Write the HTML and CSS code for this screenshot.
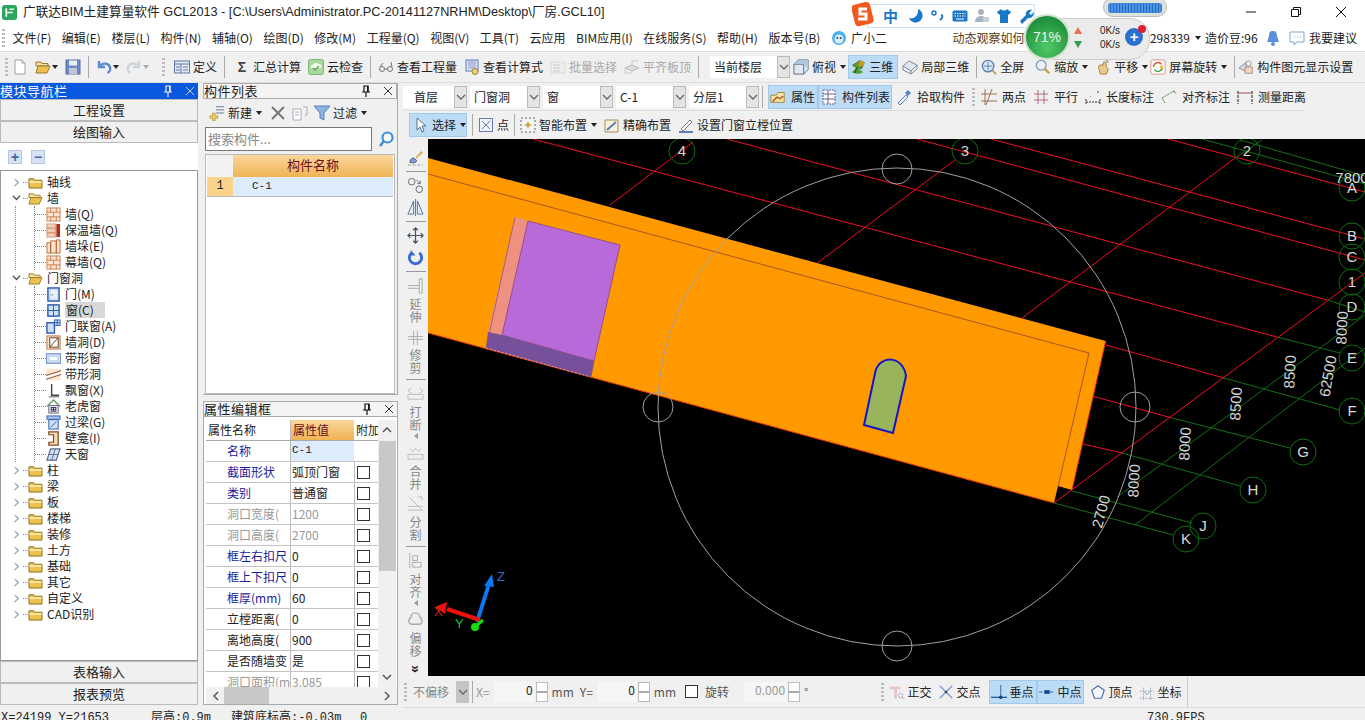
FILE: index.html
```html
<!DOCTYPE html>
<html lang="zh-CN">
<head>
<meta charset="utf-8">
<title>广联达BIM土建算量软件 GCL2013</title>
<link rel="stylesheet" href="styles.css">
</head>
<body>
<svg class="sprites" width="0" height="0">
<defs>
<symbol id="folder" viewBox="0 0 16 14"><path d="M1 3h5l1 1.500h8V13H1z" fill="#eec24a" stroke="#8a6a18"/><path d="M1.500 5.500h13v2h-13z" fill="#fbeaa8"/></symbol>
<symbol id="folderopen" viewBox="0 0 16 14"><path d="M1 2h5l1 1.500h6V6H1z" fill="#f5e3a5" stroke="#9a7a28"/><path d="M3 6h12l-3 7H1z" fill="#edc050" stroke="#9a7a28"/></symbol>
<symbol id="brick" viewBox="0 0 16 16"><rect x="1" y="1" width="14" height="14" fill="#fbe3cf" stroke="#c98050"/><path d="M1 5.500h14M1 10.500h14M5 1v4.500M11 1v4.500M8 5.500v5M5 10.500V15M11 10.500V15" stroke="#c98050" fill="none"/></symbol>
<symbol id="insul" viewBox="0 0 16 16"><rect x="1" y="1" width="9" height="14" fill="#f3cdb5" stroke="#d09a80"/><path d="M1 5.500h9M1 10.500h9" stroke="#c98050"/><rect x="11" y="1" width="4" height="14" fill="#b03020"/></symbol>
<symbol id="pier" viewBox="0 0 16 16"><path d="M1 4h4v11H1zM11 1h4v14h-4zM5 2h6v13H5z" fill="#fbe3cf" stroke="#b86a3a"/></symbol>
<symbol id="door" viewBox="0 0 16 16"><rect x="2" y="1" width="12" height="14" fill="#c8dcf4" stroke="#2a5cae" stroke-width="1.500"/><rect x="5" y="3" width="7" height="10" fill="#e8f0fa"/><rect x="6" y="8" width="1" height="1" fill="#223"/></symbol>
<symbol id="win" viewBox="0 0 16 16"><rect x="2" y="2" width="12" height="12" fill="#cfe0f6" stroke="#2a5cae" stroke-width="1.500"/><path d="M8 2v12M2 8h12" stroke="#2a5cae"/></symbol>
<symbol id="doorwin" viewBox="0 0 16 16"><rect x="1" y="4" width="8" height="11" fill="#cfe0f6" stroke="#2a5cae" stroke-width="1.500"/><rect x="9" y="1" width="6" height="6" fill="#cfe0f6" stroke="#2a5cae"/><path d="M12 1v6M9 4h6" stroke="#2a5cae"/></symbol>
<symbol id="hole" viewBox="0 0 16 16"><rect x="1" y="1" width="14" height="14" fill="#fbe3cf" stroke="#b86a3a"/><rect x="4" y="3" width="9" height="10" fill="#fff" stroke="#5a3a20"/><path d="M4 13l9-10" stroke="#5a3a20"/></symbol>
<symbol id="strip" viewBox="0 0 16 16"><rect x="0.500" y="3" width="15" height="10" fill="#e4ecf8" stroke="#7a9ad0" stroke-width="1.500"/><rect x="3" y="5.500" width="10" height="5" fill="#f8fbff" stroke="#b0c4e4"/></symbol>
<symbol id="striphole" viewBox="0 0 16 16"><rect x="0.500" y="2" width="15" height="12" fill="#fbe3cf"/><path d="M0 10l16-5v3L0 13z" fill="#fff"/><path d="M0 9l16-5M0 13l16-5" stroke="#8a4a20"/></symbol>
<symbol id="bay" viewBox="0 0 16 16"><path d="M6 1v12h8" fill="none" stroke="#444" stroke-width="1.500"/><path d="M3 14h11v1.500H3z" fill="#888"/></symbol>
<symbol id="dormer" viewBox="0 0 16 16"><path d="M1 8l7-7 7 7" fill="none" stroke="#6a9a6a" stroke-width="1.500"/><rect x="3" y="7" width="10" height="8" fill="#eef" stroke="#667"/><rect x="5.500" y="9" width="5" height="4" fill="#fff" stroke="#334"/><path d="M8 9v4M5.500 11h5" stroke="#334"/></symbol>
<symbol id="lintel" viewBox="0 0 16 16"><rect x="1" y="1" width="14" height="3.500" fill="#a8c8ec" stroke="#2a5cae"/><rect x="3" y="5" width="10" height="10" fill="#cfe0f6" stroke="#2a5cae"/><path d="M5 13l6-6" stroke="#2a5cae"/></symbol>
<symbol id="niche" viewBox="0 0 16 16"><path d="M3 1h10v14H3v-3h5V4H3z" fill="#fbd8b8" stroke="#7a4a20" stroke-width="1.300"/></symbol>
<symbol id="sky" viewBox="0 0 16 16"><path d="M5 2h10l-4 12H1z" fill="#d4e0f2" stroke="#5a6a8a" stroke-width="1.300"/><path d="M10 2L6 14M3 8h10" stroke="#5a6a8a"/></symbol>
<symbol id="page" viewBox="0 0 16 16"><path d="M3 1h7l3 3v11H3z" fill="#fff" stroke="#a0a0a0"/><path d="M10 1v3h3" fill="#eee" stroke="#a0a0a0"/></symbol>
<symbol id="save" viewBox="0 0 16 16"><rect x="1" y="1" width="14" height="14" fill="#6a8ac8" stroke="#5a6ea8"/><rect x="4" y="1.500" width="8" height="5" fill="#e8eef8"/><rect x="4" y="9" width="8" height="6" fill="#c4c4d4"/></symbol>
<symbol id="undo" viewBox="0 0 16 16"><path d="M3 2v6h6M3.500 8C5 4 12 3 14 8c.8 2.500-.5 5-2.500 6" fill="none" stroke="#5a8ad0" stroke-width="2.400"/></symbol>
<symbol id="redo" viewBox="0 0 16 16"><path d="M13 2v6H7M12.500 8C11 4 4 3 2 8c-.8 2.500.5 5 2.500 6" fill="none" stroke="#ccd4dc" stroke-width="2.400"/></symbol>
<symbol id="def" viewBox="0 0 16 16"><rect x="0.500" y="2" width="15" height="12" fill="#e4eaf4" stroke="#5a78a8"/><path d="M0.500 5h15M7 5v9M2 8h4M2 11h4M9 8h5M9 11h5" stroke="#5a78a8"/></symbol>
<symbol id="cloud" viewBox="0 0 16 16"><rect x="0.500" y="0.500" width="15" height="15" rx="2" fill="#a8d8a0" stroke="#7ab870"/><path d="M3 9h10a2.500 2.500 0 0 0-2-4 4 4 0 0 0-6 1 2 2 0 0 0-2 3z" fill="#f4fbf2"/><path d="M5 9l2 2 4-4" stroke="#5aa850" stroke-width="1.500" fill="none"/></symbol>
<symbol id="glasses" viewBox="0 0 16 16"><circle cx="4" cy="10" r="2.500" fill="none" stroke="#777"/><circle cx="12" cy="10" r="2.500" fill="none" stroke="#777"/><path d="M6.500 10h3M2 8l3-4M14 8l-1-5" stroke="#777" fill="none"/></symbol>
<symbol id="calcf" viewBox="0 0 16 16"><rect x="2" y="1" width="12" height="11" fill="#dfe6f2" stroke="#5a78b8"/><path d="M4 3h8M4 5h8M4 7h8M4 9h8" stroke="#8a9ac8"/><circle cx="11" cy="12.500" r="3" fill="#f0d070" stroke="#a08030"/></symbol>
<symbol id="batch" viewBox="0 0 16 16"><rect x="1" y="3" width="14" height="11" fill="#eee" stroke="#ccc" stroke-dasharray="1.500 1"/><path d="M3 6h7M3 9h7M3 12h7" stroke="#ccc"/></symbol>
<symbol id="flat" viewBox="0 0 16 16"><path d="M1 9l7-3 7 3-7 3z" fill="#ddd" stroke="#bbb"/><path d="M1 9v5h7v-2M8 6V2h6" stroke="#ccc" fill="none"/></symbol>
<symbol id="cube" viewBox="0 0 18 18"><path d="M1 6l5-5h11v11l-5 5H1z" fill="#dde8f2" stroke="#567"/><path d="M1 6h11v11M12 6l5-5" fill="none" stroke="#567"/><path d="M6 1h11v11l-5-6H1z" fill="#b0c8dc"/></symbol>
<symbol id="three" viewBox="0 0 18 18"><path d="M2 15l6-5 7 5-6 2z" fill="#4aa030"/><path d="M3 7l8-5 5 2-3 7-5-1z" fill="#6a9a30" stroke="#3a6a10"/><circle cx="13" cy="5" r="3" fill="#c89a20"/><path d="M5 16l3-7" stroke="#2a6a10" stroke-width="2"/></symbol>
<symbol id="local" viewBox="0 0 16 16"><path d="M1 7l6-5 8 4-6 6z" fill="#dfe8f2" stroke="#7a8a9a"/><path d="M1 7v4l8 4v-3M15 6v4l-6 5" fill="none" stroke="#7a8a9a"/></symbol>
<symbol id="full" viewBox="0 0 18 18"><circle cx="8" cy="8" r="6.500" fill="#d8e6f6" stroke="#5a80b0" stroke-width="1.500"/><path d="M8 3v10M3 8h10" stroke="#5a80b0"/><path d="M13 13l4 4" stroke="#b89a50" stroke-width="2"/></symbol>
<symbol id="zoom" viewBox="0 0 18 18"><circle cx="7" cy="7" r="5.500" fill="#e8f0f8" stroke="#8a9ab0" stroke-width="1.500"/><path d="M11 11l5 5" stroke="#c89a40" stroke-width="2.500"/></symbol>
<symbol id="pan" viewBox="0 0 18 18"><path d="M4 9c0-2 3-3 5-2l1-4 2 1 1 5 2 2-2 6H6z" fill="#e8c888" stroke="#a08040"/><path d="M12 1l3 2-3 1" stroke="#777" fill="none"/></symbol>
<symbol id="rot" viewBox="0 0 18 18"><rect x="1" y="1" width="16" height="16" rx="2" fill="#fff" stroke="#d88"/><path d="M4 9a5 5 0 0 1 9-3" fill="none" stroke="#e05030" stroke-width="1.500"/><path d="M14 9a5 5 0 0 1-9 3" fill="none" stroke="#40a040" stroke-width="1.500"/><circle cx="13" cy="9" r="2" fill="#e8c040"/></symbol>
<symbol id="disp" viewBox="0 0 18 18"><path d="M1 10l8-6v10z" fill="#d8dee8" stroke="#889"/><circle cx="12" cy="5" r="3" fill="#eee" stroke="#998"/><rect x="8" y="9" width="8" height="7" fill="#f0d8c0" stroke="#a87"/></symbol>
<symbol id="prop" viewBox="0 0 18 16"><path d="M1 6h6l2-3h7v11H1z" fill="#f8e4a0" stroke="#a08030"/><path d="M3 13l5-5 3 2 4-3" stroke="#b05020" fill="none" stroke-width="1.500"/></symbol>
<symbol id="list" viewBox="0 0 16 16"><path d="M2 1h12v14H2z" fill="#fff" stroke="#668" stroke-dasharray="2 1"/><path d="M7 1v14M2 5h12M2 10h12" stroke="#668"/></symbol>
<symbol id="pick" viewBox="0 0 16 16"><path d="M2 14l8-8 2 2-8 8z" fill="#e8f0fa" stroke="#5a80c0"/><path d="M9 4l3-3 3 3-3 3z" fill="#5a80c0"/></symbol>
<symbol id="twopt" viewBox="0 0 16 16"><path d="M0 12h16M0 5h16M4 0v16M11 0L5 16" stroke="#a07050" fill="none"/></symbol>
<symbol id="para" viewBox="0 0 16 16"><path d="M1 5h14M1 11h14M5 1v14M11 1v14" stroke="#b07080" fill="none"/></symbol>
<symbol id="dimlen" viewBox="0 0 16 16"><path d="M1 10v5M15 10v5M1 13h14" stroke="#333" fill="none" stroke-dasharray="2 1"/><path d="M12 2h2v2h-2zM5 7h1v1H5z" fill="#7ab060"/></symbol>
<symbol id="dimali" viewBox="0 0 16 16"><path d="M1 9l12-7M4 14L1 9M13 2l2 3" stroke="#4a7a4a" fill="none" stroke-dasharray="2 1"/></symbol>
<symbol id="measure" viewBox="0 0 16 16"><path d="M1 2v13M15 2v13" stroke="#222" fill="none" stroke-dasharray="3 1"/><path d="M1 4h14" stroke="#a05050"/></symbol>
<symbol id="cursor" viewBox="0 0 16 16"><path d="M4 1v12l3-3 2 5 2-1-2-5h4z" fill="#fff" stroke="#5a6a8a"/></symbol>
<symbol id="pt" viewBox="0 0 16 16"><rect x="1.500" y="1.500" width="13" height="13" fill="#eef2fa" stroke="#6a7ab0"/><path d="M4 4l8 8M12 4l-8 8" stroke="#6a7ab0"/></symbol>
<symbol id="smart" viewBox="0 0 16 16"><rect x="1" y="1" width="14" height="14" fill="#f4f4f4" stroke="#667" stroke-dasharray="2 2"/><path d="M8 4l1 3 3 1-3 1-1 3-1-3-3-1 3-1z" fill="#c89a20"/></symbol>
<symbol id="exact" viewBox="0 0 16 16"><path d="M1 3h13v12H1z" fill="#f8f0d8" stroke="#a09060"/><path d="M3 13l9-8" stroke="#5a80c0" stroke-width="2"/></symbol>
<symbol id="setpos" viewBox="0 0 16 16"><path d="M1 15h14" stroke="#5a80c0" stroke-width="2"/><path d="M3 12l9-9 2 2-9 9z" fill="#fff" stroke="#777"/></symbol>
<symbol id="brush" viewBox="0 0 18 18"><path d="M3 14c1-4 3-5 5-4l2 2c0 3-3 3-7 2z" fill="#7aa0d0" stroke="#456"/><path d="M9 9l6-7 2 2-7 6z" fill="#d8b060"/><path d="M1 17h16" stroke="#999" stroke-dasharray="3 2"/></symbol>
<symbol id="copyc" viewBox="0 0 18 18"><circle cx="5" cy="5" r="3.500" fill="none" stroke="#667"/><circle cx="13" cy="13" r="3.500" fill="none" stroke="#667"/><path d="M10 3l4 4M14 4v3h-3" stroke="#667" fill="none"/></symbol>
<symbol id="mirror" viewBox="0 0 18 18"><path d="M7 2L1 16h6zM11 2l6 14h-6z" fill="#e4ecf8" stroke="#5a70a0"/><path d="M9 0v18" stroke="#5a70a0"/></symbol>
<symbol id="move" viewBox="0 0 18 18"><path d="M9 1v16M1 9h16M6.500 3.500L9 1l2.500 2.500M6.500 14.500L9 17l2.500-2.500M3.500 6.500L1 9l2.500 2.500M14.500 6.500L17 9l-2.500 2.500" stroke="#456" fill="none" stroke-width="1.300"/></symbol>
<symbol id="rotate" viewBox="0 0 18 18"><path d="M5 4a6.500 6.500 0 1 0 8 0" fill="none" stroke="#3a6ad0" stroke-width="3"/><path d="M4 1v6h5" fill="#3a6ad0"/></symbol>
<symbol id="extend" viewBox="0 0 18 18"><path d="M1 9h12M1 12h12" stroke="#aaa"/><rect x="13" y="2" width="3" height="15" fill="none" stroke="#aaa"/></symbol>
<symbol id="trim" viewBox="0 0 18 18"><path d="M1 9h16M1 12h16M7 3v15M11 3v15" stroke="#aaa" fill="none"/></symbol>
<symbol id="breakx" viewBox="0 0 18 18"><path d="M1 10h16v5H1zM5 3l-4 3 4 3M13 3l4 3-4 3" stroke="#bbb" fill="none"/></symbol>
<symbol id="mergex" viewBox="0 0 18 18"><path d="M1 11h16v5H1zM3 5l3 3 3-3M9 5l3 3 3-3" stroke="#bbb" fill="none"/></symbol>
<symbol id="splitx" viewBox="0 0 18 18"><path d="M1 12h16M1 16h16M2 2l14 14M12 2h4v4" stroke="#bbb" fill="none"/></symbol>
<symbol id="alignx" viewBox="0 0 18 18"><path d="M3 1v16M6 4h5v5H6zM6 11h9v5H6z" stroke="#aaa" fill="none"/></symbol>
<symbol id="offsetx" viewBox="0 0 18 18"><path d="M4 14a4 4 0 0 1 0-7 5 5 0 0 1 10 0 4 4 0 0 1 0 7z" fill="#eee" stroke="#aaa" stroke-width="1.500"/></symbol>
<symbol id="ortho" viewBox="0 0 18 18"><path d="M1 3h12v3H9v11H6V6H1z" fill="#e8c4c4"/><circle cx="13" cy="13" r="2.500" fill="none" stroke="#aac"/><path d="M15 15l2 2" stroke="#aac"/></symbol>
<symbol id="cross" viewBox="0 0 18 18"><path d="M2 2l14 14M16 2L2 16" stroke="#7a9ad0" stroke-width="1.500"/><circle cx="9" cy="9" r="1.500" fill="#345"/></symbol>
<symbol id="perp" viewBox="0 0 18 18"><path d="M0 15h18" stroke="#2a5aa0" stroke-width="1.500"/><path d="M11 1v14" stroke="#2a5aa0"/><circle cx="11" cy="15" r="2" fill="#13408a"/></symbol>
<symbol id="mid" viewBox="0 0 18 18"><path d="M0 9h18" stroke="#2a5aa0" stroke-dasharray="4 2"/><rect x="6" y="7" width="6" height="4" fill="#13408a"/></symbol>
<symbol id="vertex" viewBox="0 0 18 18"><path d="M9 2l7 5-3 9H5L2 7z" fill="#f4f8fc" stroke="#4a70a8" stroke-width="1.300"/></symbol>
<symbol id="coord" viewBox="0 0 18 18"><path d="M1 8h16M1 16h16M5 4v14M13 4v14" stroke="#9ab" stroke-dasharray="2 1"/><path d="M5 8l4 4 4-4" stroke="#6a9ac0" fill="none"/></symbol>
<symbol id="pin" viewBox="0 0 10 12"><path d="M3 1h4v6H3zM1 7h8M5 7v5" stroke="#111" fill="none" stroke-width="1.200"/><path d="M6 1h1.500v6H6z" fill="#111"/></symbol>
<symbol id="closex" viewBox="0 0 10 10"><path d="M1 1l8 8M9 1l-8 8" stroke="#333" fill="none"/></symbol>
<symbol id="addn" viewBox="0 0 18 18"><path d="M8 2h9M8 5.500h9M8 9h9" stroke="#5a6a8a"/><path d="M4 9h3v3h3v3H7v3H4v-3H1v-3h3z" fill="#e8c860" stroke="#a08a30" stroke-width=".6"/></symbol>
<symbol id="copyd" viewBox="0 0 16 16"><path d="M1 4h8v11H1z" fill="#fff" stroke="#aab"/><path d="M3 7h4M3 10h4M11 2h4v8h-2" stroke="#aab" fill="none"/></symbol>
<symbol id="filter" viewBox="0 0 16 16"><path d="M0 1h16l-6 7v7l-4-2V8z" fill="#8ab4e4" stroke="#5a80b8"/></symbol>
<symbol id="search" viewBox="0 0 16 16"><circle cx="9.500" cy="6.500" r="5" fill="#fff" stroke="#3a90d8" stroke-width="2.200"/><path d="M6 10l-4 5" stroke="#3a90d8" stroke-width="2.600"/></symbol>
<symbol id="chev" viewBox="0 0 10 6"><path d="M1 1l4 4 4-4" fill="none" stroke="#666" stroke-width="1.300"/></symbol>
<symbol id="chevr" viewBox="0 0 8 10"><path d="M2 1l4 4-4 4" fill="none" stroke="#aaa" stroke-width="1.600"/></symbol>
<symbol id="chevd" viewBox="0 0 10 8"><path d="M1 1l4 4 4-4" fill="none" stroke="#555" stroke-width="1.600"/></symbol>
</defs>
</svg>

<div class="app">
  <header class="titlebar">
    <svg class="logo" viewBox="0 0 14 14"><rect width="14" height="14" rx="2.500" fill="#2aa860"/><path d="M4 3v8M4 7h6M7 4h4" stroke="#fff" stroke-width="1.500" fill="none"/></svg>
    <span class="title-text">广联达BIM土建算量软件 GCL2013 - [C:\Users\Administrator.PC-20141127NRHM\Desktop\厂房.GCL10]</span>
    <div class="winbtns">
      <svg class="winbtn" viewBox="0 0 12 12"><path d="M1 6h10" stroke="#111"/></svg>
      <svg class="winbtn" viewBox="0 0 12 12"><path d="M1.500 3.500h7v7h-7zM3.500 3.500v-2h7v7h-2" fill="none" stroke="#111"/></svg>
      <svg class="winbtn" viewBox="0 0 12 12"><path d="M1 1l10 10M11 1L1 11" stroke="#111"/></svg>
    </div>
  </header>

  <nav class="menubar">
    <span class="grip"></span>
    <span>文件(F)</span><span>编辑(E)</span><span>楼层(L)</span><span>构件(N)</span><span>辅轴(O)</span><span>绘图(D)</span><span>修改(M)</span><span>工程量(Q)</span><span>视图(V)</span><span>工具(T)</span><span>云应用</span><span>BIM应用(I)</span><span>在线服务(S)</span><span>帮助(H)</span><span>版本号(B)</span>
    <span class="helper"><svg class="ic16" viewBox="0 0 16 16"><circle cx="8" cy="8" r="7" fill="#4ab0ea"/><circle cx="8" cy="9" r="4.500" fill="#d8f0fc"/><circle cx="6.300" cy="8" r="1" fill="#246"/><circle cx="9.700" cy="8" r="1" fill="#246"/></svg>广小二</span>
    <span class="question">动态观察如何</span>
    <span class="account">298339 <i class="tri"></i> 造价豆:96</span>
    <svg class="ic16 bell" viewBox="0 0 16 16"><path d="M8 1c3 0 4 2 4 5l2 6H2l2-6c0-3 1-5 4-5z" fill="#5a90dc"/><circle cx="8" cy="14" r="2" fill="#5a90dc"/></svg>
    <svg class="ic16 speech" viewBox="0 0 16 16"><path d="M1 2h14v10H8l-3 3v-3H1z" fill="#fff" stroke="#7aa8d8"/><path d="M5 7h1M8 7h1M11 7h1" stroke="#7aa8d8"/></svg>
    <span class="suggest">我要建议</span>
  </nav>

  <div class="toolbar main-tools">
    <span class="grip"></span>
    <svg class="ic16"><use href="#page"/></svg>
    <span class="openbtn"><svg class="ic16" viewBox="0 0 16 16"><use href="#folderopen"/></svg><i class="tri"></i></span>
    <svg class="ic16"><use href="#save"/></svg>
    <span class="sep"></span>
    <span class="openbtn"><svg class="ic16"><use href="#undo"/></svg><i class="tri"></i></span>
    <span class="openbtn"><svg class="ic16"><use href="#redo"/></svg><i class="tri tri-off"></i></span>
    <span class="grip wide"></span>
    <span class="tool"><svg class="ic16"><use href="#def"/></svg>定义</span>
    <span class="sep"></span>
    <span class="tool t-sum"><b class="sigma">Σ</b>汇总计算</span>
    <span class="tool"><svg class="ic16"><use href="#cloud"/></svg>云检查</span>
    <span class="sep"></span>
    <span class="tool"><svg class="ic16"><use href="#glasses"/></svg>查看工程量</span>
    <span class="tool"><svg class="ic16"><use href="#calcf"/></svg>查看计算式</span>
    <span class="tool off"><svg class="ic16"><use href="#batch"/></svg>批量选择</span>
    <span class="tool off"><svg class="ic16"><use href="#flat"/></svg>平齐板顶</span>
    <span class="sep"></span>
    <span class="combo floor"><span>当前楼层</span><i class="combo-btn"><svg class="chev"><use href="#chev"/></svg></i></span>
    <span class="tool t-view"><svg class="ic16"><use href="#cube"/></svg>俯视<i class="tri"></i></span>
    <span class="tool active t-3d"><svg class="ic16"><use href="#three"/></svg>三维</span>
    <span class="tool t-local"><svg class="ic16"><use href="#local"/></svg>局部三维</span>
    <span class="sep"></span>
    <span class="tool t-full"><svg class="ic16"><use href="#full"/></svg>全屏</span>
    <span class="tool t-zoom"><svg class="ic16"><use href="#zoom"/></svg>缩放<i class="tri"></i></span>
    <span class="tool"><svg class="ic16"><use href="#pan"/></svg>平移<i class="tri"></i></span>
    <span class="tool t-rot"><svg class="ic16"><use href="#rot"/></svg>屏幕旋转<i class="tri"></i></span>
    <span class="sep"></span>
    <span class="tool t-disp"><svg class="ic16"><use href="#disp"/></svg>构件图元显示设置</span>
  </div>

  <main class="workspace">
    <aside class="nav-panel">
      <div class="dock-head blue"><span>模块导航栏</span><svg class="pin"><use href="#pin"/></svg><svg class="xbtn"><use href="#closex"/></svg></div>
      <button class="nav-btn" type="button">工程设置</button>
      <button class="nav-btn" type="button">绘图输入</button>
      <div class="tree-tools"><span class="pm">+</span><span class="pm">−</span></div>
      <div class="tree">
        <div class="node"><svg class="tw"><use href="#chevr"/></svg><i class="dash"></i><svg class="fold"><use href="#folder"/></svg>轴线</div>
        <div class="node"><svg class="tw"><use href="#chevd"/></svg><i class="dash"></i><svg class="fold"><use href="#folderopen"/></svg>墙</div>
        <div class="kids"><div class="kids-in">
          <div class="leaf"><i class="dash2"></i><svg class="ic15"><use href="#brick"/></svg>墙(Q)</div>
          <div class="leaf"><i class="dash2"></i><svg class="ic15"><use href="#insul"/></svg>保温墙(Q)</div>
          <div class="leaf"><i class="dash2"></i><svg class="ic15"><use href="#pier"/></svg>墙垛(E)</div>
          <div class="leaf"><i class="dash2"></i><svg class="ic15"><use href="#brick"/></svg>幕墙(Q)</div>
        </div></div>
        <div class="node"><svg class="tw"><use href="#chevd"/></svg><i class="dash"></i><svg class="fold"><use href="#folderopen"/></svg>门窗洞</div>
        <div class="kids"><div class="kids-in">
          <div class="leaf"><i class="dash2"></i><svg class="ic15"><use href="#door"/></svg>门(M)</div>
          <div class="leaf sel"><i class="dash2"></i><svg class="ic15"><use href="#win"/></svg><span>窗(C)</span></div>
          <div class="leaf"><i class="dash2"></i><svg class="ic15"><use href="#doorwin"/></svg>门联窗(A)</div>
          <div class="leaf"><i class="dash2"></i><svg class="ic15"><use href="#hole"/></svg>墙洞(D)</div>
          <div class="leaf"><i class="dash2"></i><svg class="ic15"><use href="#strip"/></svg>带形窗</div>
          <div class="leaf"><i class="dash2"></i><svg class="ic15"><use href="#striphole"/></svg>带形洞</div>
          <div class="leaf"><i class="dash2"></i><svg class="ic15"><use href="#bay"/></svg>飘窗(X)</div>
          <div class="leaf"><i class="dash2"></i><svg class="ic15"><use href="#dormer"/></svg>老虎窗</div>
          <div class="leaf"><i class="dash2"></i><svg class="ic15"><use href="#lintel"/></svg>过梁(G)</div>
          <div class="leaf"><i class="dash2"></i><svg class="ic15"><use href="#niche"/></svg>壁龛(I)</div>
          <div class="leaf"><i class="dash2"></i><svg class="ic15"><use href="#sky"/></svg>天窗</div>
        </div></div>
        <div class="node"><svg class="tw"><use href="#chevr"/></svg><i class="dash"></i><svg class="fold"><use href="#folder"/></svg>柱</div>
        <div class="node"><svg class="tw"><use href="#chevr"/></svg><i class="dash"></i><svg class="fold"><use href="#folder"/></svg>梁</div>
        <div class="node"><svg class="tw"><use href="#chevr"/></svg><i class="dash"></i><svg class="fold"><use href="#folder"/></svg>板</div>
        <div class="node"><svg class="tw"><use href="#chevr"/></svg><i class="dash"></i><svg class="fold"><use href="#folder"/></svg>楼梯</div>
        <div class="node"><svg class="tw"><use href="#chevr"/></svg><i class="dash"></i><svg class="fold"><use href="#folder"/></svg>装修</div>
        <div class="node"><svg class="tw"><use href="#chevr"/></svg><i class="dash"></i><svg class="fold"><use href="#folder"/></svg>土方</div>
        <div class="node"><svg class="tw"><use href="#chevr"/></svg><i class="dash"></i><svg class="fold"><use href="#folder"/></svg>基础</div>
        <div class="node"><svg class="tw"><use href="#chevr"/></svg><i class="dash"></i><svg class="fold"><use href="#folder"/></svg>其它</div>
        <div class="node"><svg class="tw"><use href="#chevr"/></svg><i class="dash"></i><svg class="fold"><use href="#folder"/></svg>自定义</div>
        <div class="node"><svg class="tw"><use href="#chevr"/></svg><i class="dash"></i><svg class="fold"><use href="#folder"/></svg>CAD识别</div>
      </div>
      <button class="nav-btn" type="button">表格输入</button>
      <button class="nav-btn" type="button">报表预览</button>
    </aside>

    <section class="mid-panel">
      <div class="mid-top">
        <div class="dock-head light"><span>构件列表</span><svg class="pin"><use href="#pin"/></svg><svg class="xbtn"><use href="#closex"/></svg></div>
        <div class="list-tools">
          <span class="tool"><svg class="ic16"><use href="#addn"/></svg>新建<i class="tri"></i></span>
          <svg class="ic16 bigx" viewBox="0 0 16 16"><path d="M2 2l12 12M14 2L2 14" stroke="#777" stroke-width="2"/></svg>
          <svg class="ic16"><use href="#copyd"/></svg>
          <span class="tool"><svg class="ic16"><use href="#filter"/></svg>过滤<i class="tri"></i></span>
        </div>
        <div class="search-row"><span class="search-box">搜索构件...</span><svg class="ic16 search-ic"><use href="#search"/></svg></div>
        <div class="comp-table">
          <div class="comp-head"><span></span><span class="comp-title">构件名称</span></div>
          <div class="comp-row"><span class="comp-no">1</span><span class="comp-name">C-1</span></div>
        </div>
      </div>
      <div class="mid-bottom">
        <div class="dock-head light"><span>属性编辑框</span><svg class="pin"><use href="#pin"/></svg><svg class="xbtn"><use href="#closex"/></svg></div>
        <div class="prop-wrap">
          <div class="prop-main">
            <div class="prop-grid">
              <div class="prow phead"><span class="ph-name">属性名称</span><span class="ph-val">属性值</span><span class="ph-add">附加</span></div>
              <div class="prow"><span class="k blue-k">名称</span><span class="v first">C-1</span><span></span></div>
              <div class="prow"><span class="k blue-k">截面形状</span><span class="v">弧顶门窗</span><span class="c"><i></i></span></div>
              <div class="prow"><span class="k blue-k">类别</span><span class="v">普通窗</span><span class="c"><i></i></span></div>
              <div class="prow"><span class="k gray-k">洞口宽度(</span><span class="v gray-k">1200</span><span class="c"><i></i></span></div>
              <div class="prow"><span class="k gray-k">洞口高度(</span><span class="v gray-k">2700</span><span class="c"><i></i></span></div>
              <div class="prow"><span class="k blue-k">框左右扣尺</span><span class="v">0</span><span class="c"><i></i></span></div>
              <div class="prow"><span class="k blue-k">框上下扣尺</span><span class="v">0</span><span class="c"><i></i></span></div>
              <div class="prow"><span class="k blue-k">框厚(mm)</span><span class="v">60</span><span class="c"><i></i></span></div>
              <div class="prow"><span class="k">立樘距离(</span><span class="v">0</span><span class="c"><i></i></span></div>
              <div class="prow"><span class="k">离地高度(</span><span class="v">900</span><span class="c"><i></i></span></div>
              <div class="prow"><span class="k">是否随墙变</span><span class="v">是</span><span class="c"><i></i></span></div>
              <div class="prow"><span class="k gray-k">洞口面积(m</span><span class="v gray-k">3.085</span><span class="c"><i></i></span></div>
            </div>
            <div class="vscroll"><svg class="sc-ar" viewBox="0 0 10 8"><path d="M1 6l4-4 4 4" fill="none" stroke="#555" stroke-width="1.500"/></svg><div class="vthumb"></div><svg class="sc-ar" viewBox="0 0 10 8"><path d="M1 2l4 4 4-4" fill="none" stroke="#555" stroke-width="1.500"/></svg></div>
          </div>
          <div class="hscroll"><svg class="sc-ar" viewBox="0 0 8 10"><path d="M6 1L2 5l4 4" fill="none" stroke="#555" stroke-width="1.500"/></svg><div class="hthumb"></div><svg class="sc-ar" viewBox="0 0 8 10"><path d="M2 1l4 4-4 4" fill="none" stroke="#555" stroke-width="1.500"/></svg></div>
        </div>
      </div>
    </section>

    <section class="right-panel">
      <div class="toolbar row-combos">
        <span class="combo c64"><span>首层</span><i class="combo-btn"><svg class="chev"><use href="#chev"/></svg></i></span>
        <span class="combo c70"><span>门窗洞</span><i class="combo-btn"><svg class="chev"><use href="#chev"/></svg></i></span>
        <span class="combo c70"><span>窗</span><i class="combo-btn"><svg class="chev"><use href="#chev"/></svg></i></span>
        <span class="combo c70"><span>C-1</span><i class="combo-btn"><svg class="chev"><use href="#chev"/></svg></i></span>
        <span class="combo c70"><span>分层1</span><i class="combo-btn"><svg class="chev"><use href="#chev"/></svg></i></span>
        <span class="sep"></span>
        <span class="tool active t-prop"><svg class="ic16"><use href="#prop"/></svg>属性</span>
        <span class="tool active t-list"><svg class="ic16"><use href="#list"/></svg>构件列表</span>
        <span class="tool t-pick"><svg class="ic16"><use href="#pick"/></svg>拾取构件</span>
        <span class="grip"></span>
        <span class="tool"><svg class="ic16"><use href="#twopt"/></svg>两点</span>
        <span class="tool"><svg class="ic16"><use href="#para"/></svg>平行</span>
        <span class="tool"><svg class="ic16"><use href="#dimlen"/></svg>长度标注</span>
        <span class="tool"><svg class="ic16"><use href="#dimali"/></svg>对齐标注</span>
        <span class="tool"><svg class="ic16"><use href="#measure"/></svg>测量距离</span>
      </div>
      <div class="toolbar row-draw">
        <span class="tool active t-select"><svg class="ic16"><use href="#cursor"/></svg>选择<i class="tri"></i></span>
        <span class="sep"></span>
        <span class="tool"><svg class="ic16"><use href="#pt"/></svg>点</span>
        <span class="sep"></span>
        <span class="tool"><svg class="ic16"><use href="#smart"/></svg>智能布置<i class="tri"></i></span>
        <span class="tool"><svg class="ic16"><use href="#exact"/></svg>精确布置</span>
        <span class="tool"><svg class="ic16"><use href="#setpos"/></svg>设置门窗立樘位置</span>
      </div>
      <div class="stage">
        <div class="edit-strip">
          <svg class="strip-ic"><use href="#brush"/></svg>
          <i class="hr"></i>
          <svg class="strip-ic"><use href="#copyc"/></svg>
          <svg class="strip-ic"><use href="#mirror"/></svg>
          <i class="hr"></i>
          <svg class="strip-ic"><use href="#move"/></svg>
          <svg class="strip-ic"><use href="#rotate"/></svg>
          <i class="hr"></i>
          <svg class="strip-ic"><use href="#extend"/></svg><span class="vtext">延伸</span>
          <svg class="strip-ic"><use href="#trim"/></svg><span class="vtext">修剪</span>
          <i class="hr"></i>
          <svg class="strip-ic"><use href="#breakx"/></svg><span class="vtext">打断</span><i class="mini"></i>
          <svg class="strip-ic"><use href="#mergex"/></svg><span class="vtext">合并</span>
          <svg class="strip-ic"><use href="#splitx"/></svg><span class="vtext">分割</span>
          <i class="hr"></i>
          <svg class="strip-ic"><use href="#alignx"/></svg><span class="vtext">对齐</span><i class="mini"></i>
          <svg class="strip-ic"><use href="#offsetx"/></svg><span class="vtext">偏移</span>
          <span class="more">»</span>
        </div>
        <svg class="canvas" viewBox="428 139 937 537" preserveAspectRatio="none">
          <rect x="428" y="139" width="937" height="537" fill="#000"/>
          <g fill="none" stroke="#ee1022" stroke-width="1">
            <path d="M1168 139L1365 192M991 139L1365 239M917 139L1365 260M727 139L1327 300M533 139L1277 337M1106 345L1224 378M1092 396L1172 418M1083 444L1122 453"/>
            <path d="M1365 273L1054 503M1235 158L1022 318M955 160L816 264M693 142L610 205"/>
          </g>
          <g fill="none" stroke="#146f14" stroke-width="1">
            <path d="M1202 139L1365 184M1240 140L1365 176M1327 300L1365 312M1277 337L1340 353M1224 378L1340 410M1172 418L1290 448M1122 453L1240 486M1072 491L1192 523M1054 503L1173 535"/>
            <path d="M1365 315L1117 497M1365 348L1135 525M1235 158L1262 140"/>
          </g>
          <polygon points="428,158 1105.700,341 1072,490 1058,486 1054,503 428,333" fill="#ff9900"/>
          <path d="M428 333L1054 503M1072 490L1105.700 341" fill="none" stroke="#e03010" stroke-width="1"/>
          <path d="M428 174L1089 353L1058 487" fill="none" stroke="#a8562a" stroke-width="1"/>
          <polygon points="515,217 528,221 502,335 488,332" fill="#ee9180"/>
          <polygon points="528,221 620,245 594,361 502,335" fill="#b86bd8" stroke="#7a3a90" stroke-width=".7"/>
          <polygon points="488,332 502,335 594,361 591,377 486,348" fill="#76509a"/>
          <path d="M486 348L591 377" stroke="#ddc" stroke-width=".6" stroke-dasharray="2 2"/>
          <path d="M515 217L486 348M591 377L594 361" stroke="#8a4a70" stroke-width=".7" fill="none"/>
          <path d="M864 425L875.500 371C880 355 903 355 906 376L893 433Z" fill="#99b55c" stroke="#1414c8" stroke-width="2"/>
          <g fill="none" stroke="#a0a0a0" stroke-width="1">
            <circle cx="897" cy="407" r="239"/>
            <circle cx="897" cy="169" r="15"/>
            <circle cx="658" cy="407" r="15"/>
            <circle cx="1135" cy="407" r="15"/>
            <circle cx="897" cy="646" r="15"/>
          </g>
          <g fill="none" stroke="#0f6e0f" stroke-width="1">
            <circle cx="682" cy="151" r="13"/><circle cx="965" cy="151" r="13"/><circle cx="1247" cy="151" r="13"/>
            <circle cx="1352" cy="188" r="13"/><circle cx="1352" cy="236" r="13"/><circle cx="1352" cy="257" r="13"/><circle cx="1352" cy="282" r="13"/><circle cx="1352" cy="307" r="13"/><circle cx="1352" cy="358" r="13"/><circle cx="1352" cy="411" r="13"/>
            <circle cx="1303" cy="452" r="13"/><circle cx="1253" cy="490" r="13"/><circle cx="1203" cy="526" r="13"/><circle cx="1186" cy="539" r="13"/>
          </g>
          <g class="cad-label" text-anchor="middle">
            <text x="682" y="156">4</text><text x="965" y="156">3</text><text x="1247" y="156">2</text>
            <text x="1352" y="193">A</text><text x="1352" y="241">B</text><text x="1352" y="262">C</text><text x="1352" y="287">1</text><text x="1352" y="312">D</text><text x="1352" y="363">E</text><text x="1352" y="416">F</text>
            <text x="1303" y="457">G</text><text x="1253" y="495">H</text><text x="1203" y="531">J</text><text x="1186" y="544">K</text>
            <text x="1352" y="183">7800</text>
            <text transform="translate(1347 328) rotate(-87)">8000</text>
            <text transform="translate(1295 372) rotate(-87)">8500</text>
            <text transform="translate(1333 377) rotate(-80)">62500</text>
            <text transform="translate(1241 404) rotate(-87)">8500</text>
            <text transform="translate(1190 444) rotate(-87)">8000</text>
            <text transform="translate(1139 481) rotate(-87)">8000</text>
            <text transform="translate(1106 513) rotate(-75)">2700</text>
          </g>
          <path d="M477 622L489 584" stroke="#0a78f0" stroke-width="4" fill="none"/>
          <polygon points="492,574 484,586 494,587" fill="#0a78f0"/>
          <path d="M480 620L447 609" stroke="#f01010" stroke-width="4" fill="none"/>
          <polygon points="435,607 447,602 445,614" fill="#f01010"/>
          <circle cx="475" cy="627" r="4" fill="#10e010"/>
          <path d="M476 626L483 620" stroke="#10e010" stroke-width="3"/>
          <text class="axis-z" x="497" y="581">Z</text>
          <text class="axis-x" x="434" y="616">X</text>
          <text class="axis-y" x="455" y="628">Y</text>
        </svg>
      </div>
      <div class="toolbar row-snap">
        <span class="grip"></span>
        <span class="combo off-combo"><span>不偏移</span><i class="combo-btn gray"><svg class="chev"><use href="#chev"/></svg></i></span>
        <span class="sep"></span>
        <span class="lbl off-lbl">X=</span>
        <span class="num n42">0</span><span class="spin"></span><span class="lbl">mm</span>
        <span class="lbl y-lbl">Y=</span>
        <span class="num n40">0</span><span class="spin"></span><span class="lbl">mm</span>
        <span class="chk"></span><span class="lbl rot-lbl">旋转</span>
        <span class="num n44 gray-k">0.000</span><span class="spin"></span><span class="lbl">°</span>
        <span class="snap-set">
          <span class="grip"></span>
          <span class="tool"><svg class="ic16"><use href="#ortho"/></svg>正交</span>
          <span class="tool"><svg class="ic16"><use href="#cross"/></svg>交点</span>
          <span class="tool active t-perp"><svg class="ic16"><use href="#perp"/></svg>垂点</span>
          <span class="tool active"><svg class="ic16"><use href="#mid"/></svg>中点</span>
          <span class="tool"><svg class="ic16"><use href="#vertex"/></svg>顶点</span>
          <span class="tool"><svg class="ic16"><use href="#coord"/></svg>坐标</span>
        </span>
      </div>
    </section>
  </main>

  <footer class="status">
    <span class="s1">X=24199 Y=21653</span><span class="s2">层高:0.9m</span><span class="s3">建筑底标高:-0.03m</span><span class="s4">0</span><span class="s5">730.9FPS</span>
  </footer>
</div>

<div class="ime">
  <svg class="ime-s" viewBox="0 0 22 26"><rect x="1" y="2" width="19" height="22" rx="4" fill="#f05a1e" transform="rotate(-14 11 13)"/><path d="M15 8H8v5h6v5H6" fill="none" stroke="#fff" stroke-width="3"/></svg>
  <span class="ime-bar">
    <b>中</b>
    <svg class="ic16" viewBox="0 0 16 16"><path d="M10 1a7 7 0 1 1-9 9c5 2 10-3 9-9z" fill="#1a78c8"/></svg>
    <svg class="ic16" viewBox="0 0 16 16"><circle cx="4" cy="5" r="2" fill="none" stroke="#1a78c8" stroke-width="1.500"/><path d="M11 7c2 0 2 3-1 5" stroke="#1a78c8" stroke-width="2" fill="none"/></svg>
    <svg class="ic16 wide-ic" viewBox="0 0 16 12"><rect x=".5" y=".5" width="15" height="11" rx="1.500" fill="#1a78c8"/><path d="M2.500 3.500h11M2.500 6h11" stroke="#fff" stroke-dasharray="1.500 1"/><path d="M4 9h8" stroke="#fff"/></svg>
    <svg class="ic16" viewBox="0 0 16 16"><circle cx="7" cy="4" r="3" fill="#a8b4c0"/><path d="M1 14c0-4 3-6 6-6s3 1 3 1v5z" fill="#a8b4c0"/><rect x="9" y="9" width="6" height="5" fill="#c8d0d8"/></svg>
    <svg class="ic16" viewBox="0 0 16 16"><path d="M5 1L1 4l2 3 1-1v9h8V6l1 1 2-3-4-3c-1 2-5 2-6 0z" fill="#1a78c8"/></svg>
    <svg class="ic16" viewBox="0 0 16 16"><path d="M2 13l6-6c-1-3 2-6 6-5l-3 3 2 2 3-3c0 4-3 7-6 6l-6 6z" fill="#1a78c8"/></svg>
  </span>
</div>
<div class="net-top"><span></span></div>
<div class="net">
  <div class="ball">71%</div>
  <div class="arrows"><i class="up"></i><i class="dn"></i></div>
  <div class="rates"><span>0K/s</span><span>0K/s</span></div>
  <div class="plus">+<i></i></div>
</div>
</body>
</html>
```

FILE: styles.css
```css
* { box-sizing: border-box; }
html, body { margin: 0; padding: 0; }
body {
  width: 1365px;
  height: 720px;
  overflow: hidden;
  position: relative;
  background: #f0f0f0;
  color: #222;
  font: 12px/16px "Noto Sans CJK SC", "Noto Sans", sans-serif;
}
.sprites { position: absolute; }
.app { display: flex; flex-direction: column; width: 1365px; height: 720px; }
svg { display: block; flex: none; }
i { font-style: normal; display: block; flex: none; }

.titlebar { height: 24px; background: #fff; display: flex; align-items: center; padding-left: 2px; flex: none; }
.logo { width: 15px; height: 15px; margin-right: 6px; }
.title-text { font: 12.7px/16px "Liberation Sans", "Noto Sans CJK SC", sans-serif; color: #222; }
.winbtns { margin-left: auto; display: flex; gap: 33px; padding-right: 18px; }
.winbtn { width: 12px; height: 12px; }

.menubar { height: 28px; background: #fff; display: flex; align-items: center; gap: 10.5px; padding-left: 2px; border-bottom: 1px solid #ddd; flex: none; white-space: nowrap; }
.grip { width: 3px; height: 18px; flex: none; background: repeating-linear-gradient(#bbb 0 2px, transparent 2px 4px); margin-right: -3px; }
.helper { display: flex; align-items: center; gap: 4px; }
.question { margin-left: 55px; color: #5a3a10; }
.account { margin-left: 115px; display: flex; align-items: center; gap: 4px; }
.bell { margin-left: -3px; }
.speech { margin-left: -3px; }
.suggest { margin-left: -6px; }
.tri { width: 0; height: 0; border: 3px solid transparent; border-top: 4px solid #222; border-bottom: 0; display: inline-block; margin-left: 1px; flex: none; }
.tri-off { border-top-color: #aaa; }

.toolbar { display: flex; align-items: center; background: #f0f0f0; white-space: nowrap; }
.main-tools { height: 31px; gap: 7px; padding-left: 5px; border-bottom: 1px solid #ddd; flex: none; }
.ic16 { width: 16px; height: 16px; }
.wide-ic { height: 12px; }
.openbtn { display: flex; align-items: center; }
.sep { width: 1px; height: 22px; background: #aaa; flex: none; }
.grip.wide { margin: 0 2px 0 6px; }
.tool { display: flex; align-items: center; gap: 3px; height: 24px; flex: none; }
.tool.off { color: #a8a8a8; }
.tool.active { background: #bcdcf6; outline: 1px solid #a2c8ec; outline-offset: -1px; padding: 0 2px; }
.sigma { width: 16px; text-align: center; font: bold 14px "Liberation Sans", sans-serif; color: #444; }
.combo { display: flex; align-items: center; justify-content: space-between; background: #fff; height: 22px; padding-left: 4px; flex: none; }
.combo-btn { width: 13px; height: 22px; background: #e4e4e4; border: 1px solid #bbb; display: flex; align-items: center; justify-content: center; }
.combo-btn.gray { background: #c4c4c4; border-color: #c4c4c4; }
.chev { width: 10px; height: 6px; }
.floor { width: 80px; margin-left: 4px; }
.t-sum { margin-left: 2px; }
.t-view { margin-left: -4px; }
.t-3d { width: 50px; margin-left: -5px; }
.t-local { margin-left: -3px; }
.t-full { margin-left: -3px; }
.t-zoom { margin-left: 4px; }
.t-rot { margin-left: -5px; }
.t-disp { margin-left: -4px; }

.workspace { flex: 1; display: flex; min-height: 0; }
.nav-panel { width: 198px; display: flex; flex-direction: column; flex: none; padding-bottom: 3px; }
.dock-head { height: 16px; display: flex; align-items: center; font-size: 13px; flex: none; }
.dock-head span { flex: 1; letter-spacing: .5px; }
.dock-head.blue { background: #0a58e0; color: #fff; }
.dock-head.blue .pin, .dock-head.blue .xbtn { filter: invert(1); }
.dock-head.light { background: #f4f4f4; border: 1px solid #aaa; }
.pin { width: 10px; height: 12px; margin-right: 12px; }
.xbtn { width: 10px; height: 10px; margin-right: 3px; }
.nav-btn { height: 22px; border: 1px solid #bbb; background: #f0f0f0; font: 13px/18px "Noto Sans CJK SC", sans-serif; color: #222; padding: 0; flex: none; }
.tree-tools { height: 27px; display: flex; align-items: center; gap: 9px; padding-left: 8px; flex: none; background: #fff; }
.pm { width: 14px; height: 14px; background: #d6e2f4; border: 1px solid #b6c6e0; color: #3a6aa8; font: bold 14px/12px "Liberation Sans", sans-serif; text-align: center; }
.tree { flex: 1; min-height: 0; background: #fff; border: 1px solid #999; padding-top: 3px; overflow: hidden; }
.node { height: 16px; display: flex; align-items: center; padding-left: 11px; }
.tw { width: 9px; height: 9px; }
.dash { width: 5px; border-top: 1px dotted #888; margin: 0 0 0 2px; }
.fold { width: 15px; height: 13px; margin-right: 4px; }
.kids { margin-left: 14px; border-left: 1px dotted #999; padding-left: 18px; }
.kids-in { border-left: 1px dotted #888; }
.leaf { height: 16px; display: flex; align-items: center; }
.dash2 { width: 11px; border-top: 1px dotted #888; }
.ic15 { width: 15px; height: 15px; margin-right: 4px; }
.leaf.sel span { background: #d8d8d8; padding: 0 11px 0 1px; line-height: 16px; }

.mid-panel { width: 195px; margin-left: 5px; display: flex; flex-direction: column; flex: none; gap: 6px; padding-bottom: 3px; }
.mid-top { height: 312px; display: flex; flex-direction: column; flex: none; background: #f0f0f0; border-right: 1px solid #aaa; border-bottom: 1px solid #aaa; }
.list-tools { height: 28px; display: flex; align-items: center; gap: 6px; padding-left: 6px; flex: none; }
.bigx { margin-left: 2px; }
.search-row { height: 24px; display: flex; align-items: center; gap: 4px; padding-left: 2px; flex: none; }
.search-box { width: 167px; height: 24px; background: #fff; border: 1px solid #777; color: #888; font-size: 13px; line-height: 22px; padding-left: 2px; }
.search-ic { margin-left: 2px; }
.comp-table { flex: 1; margin: 3px 2px 0; background: #fff; border: 1px solid #bbb; padding: 0 1px; }
.comp-head { display: grid; grid-template-columns: 26px 1fr; height: 22px; background: #f2f2f2; }
.comp-title { background: linear-gradient(#f9d79c, #f0b254); color: #6a1020; text-align: center; font-size: 13px; line-height: 20px; }
.comp-row { display: grid; grid-template-columns: 26px 1fr; height: 20px; background: #dcecfc; border-bottom: 1px solid #bbb; line-height: 19px; }
.comp-no { background: #fbd28a; text-align: center; font-family: "Liberation Mono", monospace; }
.comp-name { padding-left: 19px; font-family: "Liberation Mono", monospace; font-size: 11px; }

.mid-bottom { flex: 1; min-height: 0; display: flex; flex-direction: column; }
.prop-wrap { flex: 1; min-height: 0; display: flex; flex-direction: column; background: #fff; border: 1px solid #aaa; border-top: 0; padding: 3px 0 0 2px; }
.prop-main { flex: 1; min-height: 0; display: flex; }
.prop-grid { width: 172px; overflow: hidden; flex: none; }
.prow { display: grid; grid-template-columns: 84px 64px 24px; height: 21px; border-bottom: 1px solid #c4c4c4; align-items: center; white-space: nowrap; overflow: hidden; }
.prow > span { height: 20px; line-height: 19px; overflow: hidden; }
.phead { border-bottom-color: #aaa; }
.ph-name { padding-left: 2px; }
.ph-val { background: linear-gradient(#f9d79c, #f0b254); color: #6a1020; padding-left: 2px; border-left: 1px solid #bbb; }
.ph-add { padding-left: 2px; }
.k { padding-left: 21px; }
.blue-k { color: #1a1a9a; }
.gray-k { color: #999; }
.v { border-left: 1px solid #bbb; padding-left: 1px; }
.v.first { background: #dcecfc; font: 11px/19px "Liberation Mono", monospace; }
.c { display: flex; align-items: center; padding-left: 2px; border-left: 1px solid #bbb; }
.c i { width: 13px; height: 13px; border: 1px solid #333; background: #fff; }
.vscroll { width: 18px; flex: none; background: #f0f0f0; display: flex; flex-direction: column; align-items: center; justify-content: space-between; padding: 5px 0; }
.vthumb { width: 17px; height: 130px; background: #c8c8c8; margin-bottom: auto; margin-top: 6px; }
.sc-ar { width: 10px; height: 10px; }
.hscroll { height: 17px; background: #f0f0f0; display: flex; align-items: center; justify-content: space-between; padding: 0 5px; flex: none; }
.hthumb { width: 45px; height: 17px; background: #c8c8c8; margin-right: auto; margin-left: 3px; }

.right-panel { flex: 1; min-width: 0; margin-left: 5px; display: flex; flex-direction: column; }
.row-combos { height: 28px; gap: 3px; width: 902px; flex: none; border-bottom: 1px solid #ddd; }
.c64 { width: 64px; padding-left: 11px; }
.c70 { width: 70px; }
.row-combos .sep { margin: 0 2px 0 0; }
.row-combos .tool { margin-right: 4px; gap: 5px; }
.row-combos .t-prop { margin-right: -3px; padding: 0 3px 0 2px; width: 50px; }
.row-combos .t-list { margin-right: 1px; padding: 0 2px 0 3px; width: 74px; }
.row-combos .grip { margin: 0 3px 0 0; }
.row-draw { height: 28px; gap: 7px; padding-left: 6px; width: 397px; flex: none; }
.row-draw .sep { margin: 0 -2px; }
.t-select { padding: 0 1px 0 4px !important; }
.stage { flex: 1; min-height: 0; display: flex; }
.edit-strip { width: 25px; background: #f0f0f0; flex: none; display: flex; flex-direction: column; align-items: center; gap: 5px; padding: 10px 0 2px; color: #888; overflow: hidden; }
.strip-ic { width: 17px; height: 17px; flex: none; }
.hr { width: 20px; height: 1px; background: #999; flex: none; }
.vtext { width: 12px; line-height: 13px; text-align: center; flex: none; margin-top: -2px; }
.mini { width: 0; height: 0; border: 3px solid transparent; border-right: 4px solid #999; border-left: 0; margin-top: -3px; }
.more { font: bold 14px/10px "Liberation Sans", sans-serif; color: #222; transform: rotate(90deg); margin-top: auto; }
.canvas { flex: 1; height: 537px; min-width: 0; }
.cad-label text { fill: #d8d8d8; font: 15px "Liberation Sans", sans-serif; }
.axis-z { fill: #3a6ad0; font: 13px "Liberation Sans", sans-serif; }
.axis-x { fill: #d02020; font: 13px "Liberation Sans", sans-serif; }
.axis-y { fill: #20c030; font: 13px "Liberation Sans", sans-serif; }
.row-snap { height: 32px; gap: 4px; padding-left: 1px; flex: none; border-bottom: 1px solid #ddd; }
.off-combo { width: 60px; color: #888; background: #f0f0f0; margin-left: 1px; }
.row-snap > .sep { margin: 0 -1px; }
.lbl { color: #555; flex: none; }
.off-lbl { color: #999; }
.y-lbl { margin-left: 2px; }
.rot-lbl { margin-left: 3px; }
.num { height: 20px; background: #f6f6f6; text-align: right; padding-right: 2px; flex: none; }
.n42 { width: 41px; }
.n40 { width: 40px; }
.n44 { width: 43px; margin-left: 11px; }
.spin { width: 12px; height: 20px; background: linear-gradient(#fff 0 45%, #aaa 45% 55%, #fff 55%); border: 1px solid #bbb; margin-left: -3px; flex: none; }
.chk { width: 13px; height: 13px; background: #fff; border: 1px solid #333; margin-left: 5px; flex: none; }
.snap-set { display: flex; align-items: center; gap: 6px; margin-left: 68px; height: 30px; padding-right: 5px; border-right: 1px solid #ccc; }
.snap-set .grip { margin-right: -1px; }
.t-perp { margin: 0 -6px 0 2px; padding-right: 3px !important; }

.status { height: 12px; flex: none; display: flex; background: #f0f0f0; font: 12px/16px "Liberation Mono", "Noto Sans CJK SC", monospace; overflow: hidden; color: #222; padding-top: 2px; }
.status span { flex: none; }
.s1 { width: 151px; padding-left: 1px; }
.s2 { width: 80px; }
.s3 { width: 129px; }
.s4 { width: 787px; }

.ime { position: absolute; left: 852px; top: 1px; display: flex; align-items: flex-start; }
.ime-s { width: 22px; height: 26px; position: relative; z-index: 1; }
.ime-bar { margin: 3px 0 0 -7px; width: 168px; height: 24px; background: #fff; border: 1px solid #cfe2f4; display: flex; align-items: center; padding-left: 15px; gap: 6px; }
.ime-bar b { color: #1a78c8; font-size: 15px; width: 16px; margin-right: 3px; }
.net-top { position: absolute; left: 1103px; top: -3px; width: 64px; height: 20px; border-radius: 10px; background: #dde2dc; border: 1px solid #bbb; padding: 5px 4px; }
.net-top span { display: block; height: 10px; border-radius: 3px; background: repeating-linear-gradient(90deg, #4a90e0 0 2px, #2a70c8 2px 3px); }
.net { position: absolute; left: 1024px; top: 14px; width: 126px; height: 46px; display: flex; align-items: center; }
.net::before { content: ""; position: absolute; left: 12px; top: 4px; right: 0; height: 40px; border-radius: 20px; background: #ebebeb; border: 1px solid #ccc; }
.ball { position: relative; width: 46px; height: 46px; border-radius: 50%; background: radial-gradient(circle at 50% 75%, #50c868, #20903c 75%); border: 2px solid #cfe0cf; color: #e8f8e8; font: 14px/42px "Liberation Sans", sans-serif; text-align: center; }
.arrows { position: relative; margin-left: 4px; display: flex; flex-direction: column; gap: 7px; }
.up { width: 0; height: 0; border: 4px solid transparent; border-bottom: 7px solid #e07050; border-top: 0; }
.dn { width: 0; height: 0; border: 4px solid transparent; border-top: 7px solid #30a050; border-bottom: 0; }
.rates { position: relative; margin-left: 18px; display: flex; flex-direction: column; font: 10px/13px "Liberation Sans", sans-serif; color: #222; gap: 1px; }
.plus { position: relative; margin-left: 5px; width: 18px; height: 18px; border-radius: 50%; background: #2a70d0; color: #fff; font: bold 15px/18px "Liberation Sans", sans-serif; text-align: center; }
.plus i { position: absolute; right: -3px; top: -3px; width: 8px; height: 8px; border-radius: 50%; background: #e02030; }
```
